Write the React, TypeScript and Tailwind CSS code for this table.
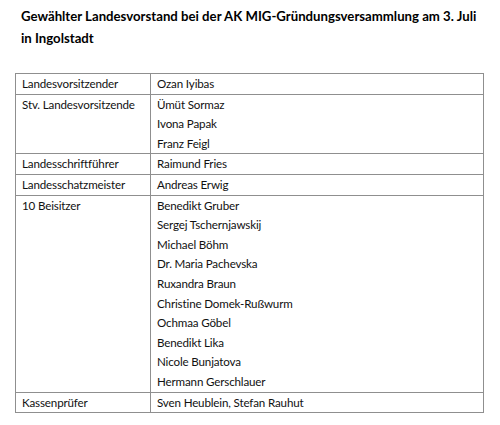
const rows: { label: string; names: string[] }[] = [
  { label: 'Landesvorsitzender', names: ['Ozan Iyibas'] },
  { label: 'Stv. Landesvorsitzende', names: ['Ümüt Sormaz', 'Ivona Papak', 'Franz Feigl'] },
  { label: 'Landesschriftführer', names: ['Raimund Fries'] },
  { label: 'Landesschatzmeister', names: ['Andreas Erwig'] },
  {
    label: '10 Beisitzer',
    names: [
      'Benedikt Gruber',
      'Sergej Tschernjawskij',
      'Michael Böhm',
      'Dr. Maria Pachevska',
      'Ruxandra Braun',
      'Christine Domek-Rußwurm',
      'Ochmaa Göbel',
      'Benedikt Lika',
      'Nicole Bunjatova',
      'Hermann Gerschlauer',
    ],
  },
  { label: 'Kassenprüfer', names: ['Sven Heublein, Stefan Rauhut'] },
];

export default function App() {
  return (
    <div className="w-[500px] h-[425px] bg-white text-black font-['Lato','Open_Sans',sans-serif] overflow-hidden">
      {/* ===== TITLE ===== */}
      <h1 className="pl-[21px] pt-[6px] text-[13.2px] font-bold leading-[21.5px] whitespace-nowrap">
        Gewählter Landesvorstand bei der AK MIG-Gründungsversammlung am 3. Juli
        <br />
        in Ingolstadt
      </h1>

      {/* ===== TABLE ===== */}
      <div className="ml-[15px] mt-[24px] w-[469px] border border-[#8f8f8f] text-[11.6px] tracking-[-0.15px] text-[#111]">
        {rows.map((row, i) => (
          <div
            key={row.label}
            className={`grid grid-cols-[135px_1fr] ${i < rows.length - 1 ? 'border-b border-[#8f8f8f]' : ''}`}
          >
            <div className="pl-[6px] leading-[19.6px] whitespace-nowrap border-r border-[#8f8f8f]">{row.label}</div>
            <div className="pl-[6px]">
              {row.names.map((name) => (
                <div key={name} className="leading-[19.6px]">{name}</div>
              ))}
            </div>
          </div>
        ))}
      </div>
    </div>
  );
}
